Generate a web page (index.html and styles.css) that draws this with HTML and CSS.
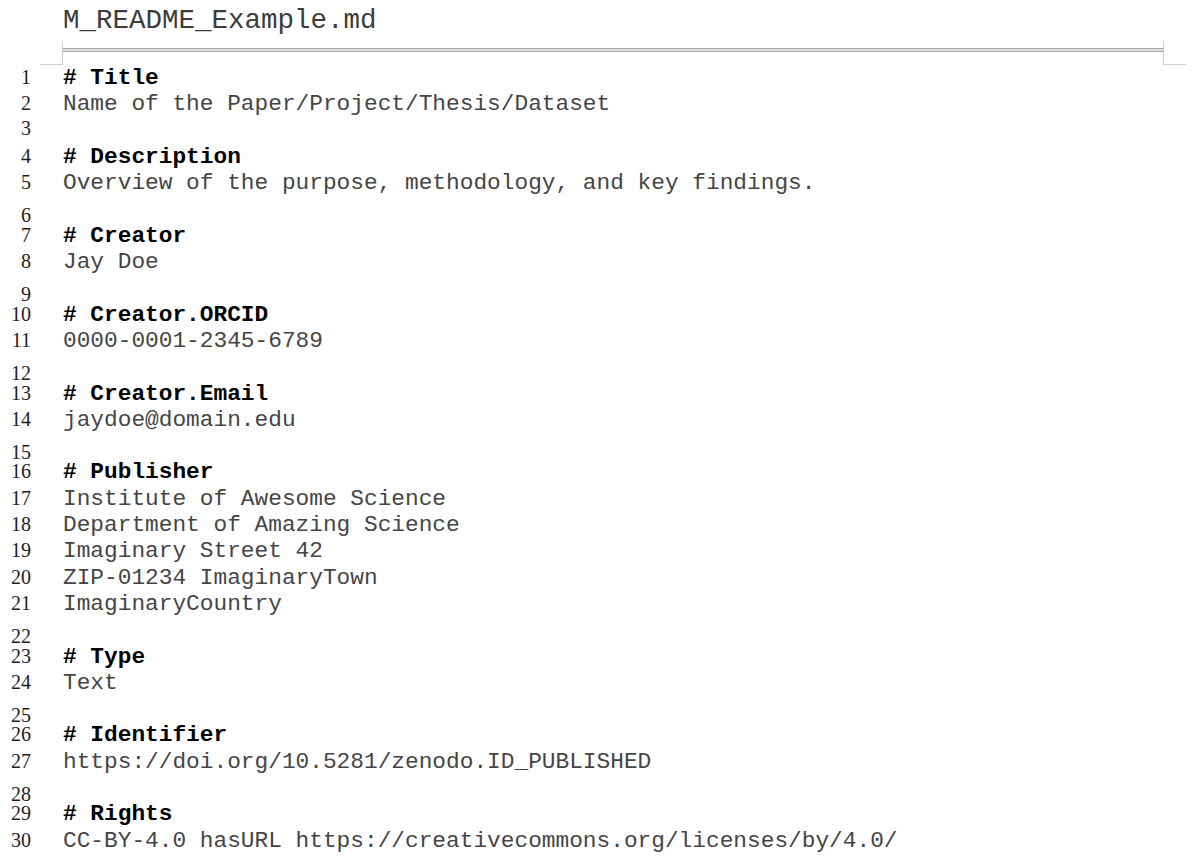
FILE: index.html
```html
<!DOCTYPE html>
<html lang="en">
<head>
<meta charset="utf-8">
<title>M_README_Example.md</title>
<link rel="stylesheet" href="styles.css">
</head>
<body>
<div class="doc">
  <div class="header">
    <div class="title">M_README_Example.md</div>
    <div class="rule-row">
      <div class="corner corner-left"></div>
      <div class="rule"></div>
      <div class="corner corner-right"></div>
    </div>
  </div>
  <div class="lines">
    <div class="row"><span class="ln">1</span><span class="tx h"># Title</span></div>
    <div class="row"><span class="ln">2</span><span class="tx">Name of the Paper/Project/Thesis/Dataset</span></div>
    <div class="row"><span class="ln">3</span><span class="tx"></span></div>
    <div class="row"><span class="ln">4</span><span class="tx h"># Description</span></div>
    <div class="row"><span class="ln">5</span><span class="tx">Overview of the purpose, methodology, and key findings.</span></div>
    <div class="row blank"><span class="ln">6</span><span class="tx"></span></div>
    <div class="row"><span class="ln">7</span><span class="tx h"># Creator</span></div>
    <div class="row"><span class="ln">8</span><span class="tx">Jay Doe</span></div>
    <div class="row blank"><span class="ln">9</span><span class="tx"></span></div>
    <div class="row"><span class="ln">10</span><span class="tx h"># Creator.ORCID</span></div>
    <div class="row"><span class="ln">11</span><span class="tx">0000-0001-2345-6789</span></div>
    <div class="row blank"><span class="ln">12</span><span class="tx"></span></div>
    <div class="row"><span class="ln">13</span><span class="tx h"># Creator.Email</span></div>
    <div class="row"><span class="ln">14</span><span class="tx">jaydoe@domain.edu</span></div>
    <div class="row blank"><span class="ln">15</span><span class="tx"></span></div>
    <div class="row"><span class="ln">16</span><span class="tx h"># Publisher</span></div>
    <div class="row"><span class="ln">17</span><span class="tx">Institute of Awesome Science</span></div>
    <div class="row"><span class="ln">18</span><span class="tx">Department of Amazing Science</span></div>
    <div class="row"><span class="ln">19</span><span class="tx">Imaginary Street 42</span></div>
    <div class="row"><span class="ln">20</span><span class="tx">ZIP-01234 ImaginaryTown</span></div>
    <div class="row"><span class="ln">21</span><span class="tx">ImaginaryCountry</span></div>
    <div class="row blank"><span class="ln">22</span><span class="tx"></span></div>
    <div class="row"><span class="ln">23</span><span class="tx h"># Type</span></div>
    <div class="row"><span class="ln">24</span><span class="tx">Text</span></div>
    <div class="row blank"><span class="ln">25</span><span class="tx"></span></div>
    <div class="row"><span class="ln">26</span><span class="tx h"># Identifier</span></div>
    <div class="row"><span class="ln">27</span><span class="tx">https://doi.org/10.5281/zenodo.ID_PUBLISHED</span></div>
    <div class="row blank"><span class="ln">28</span><span class="tx"></span></div>
    <div class="row"><span class="ln">29</span><span class="tx h"># Rights</span></div>
    <div class="row"><span class="ln">30</span><span class="tx">CC-BY-4.0 hasURL https://creativecommons.org/licenses/by/4.0/</span></div>
  </div>
</div>
</body>
</html>
```
FILE: styles.css
```css
html, body {
  margin: 0;
  padding: 0;
  background: #ffffff;
}

.doc {
  width: 1200px;
  height: 862px;
  overflow: hidden;
}

.header {
  margin-left: 40px;
  width: 1146px;
}

.title {
  padding-top: 5px;
  padding-left: 23px;
  font-family: "Liberation Mono", "Courier New", monospace;
  font-size: 27.5px;
  line-height: 32px;
  color: #3c3c3c;
  white-space: pre;
}

.rule-row {
  display: flex;
  margin-top: 4px;
  height: 24px;
}

.corner {
  box-sizing: border-box;
  height: 24px;
  border-bottom: 1px solid #cfcfcf;
}

.corner-left {
  width: 23px;
  border-right: 1px solid #cfcfcf;
}

.corner-right {
  width: 23px;
  border-left: 1px solid #cfcfcf;
}

.rule {
  flex: 1;
  margin-top: 7px;
  height: 2px;
  border-top: 1px solid #a8a8a8;
  border-bottom: 1px solid #a8a8a8;
  background: #dcdcdc;
}

.lines {
  display: flex;
  flex-direction: column;
}

.row {
  display: flex;
  align-items: baseline;
  height: 26.31px;
}

.ln {
  width: 31px;
  text-align: right;
  font-family: "Liberation Serif", "Times New Roman", serif;
  font-size: 20px;
  line-height: 20px;
  color: #1e1e1e;
}

.tx {
  margin-left: 32px;
  font-family: "Liberation Mono", "Courier New", monospace;
  font-size: 22.8px;
  line-height: 26.31px;
  color: #454545;
  white-space: pre;
}

.tx.h {
  font-weight: bold;
  color: #000000;
}

.row.blank {
  align-items: flex-start;
}

.row.blank .ln {
  padding-top: 13px;
  line-height: 12px;
}
```
